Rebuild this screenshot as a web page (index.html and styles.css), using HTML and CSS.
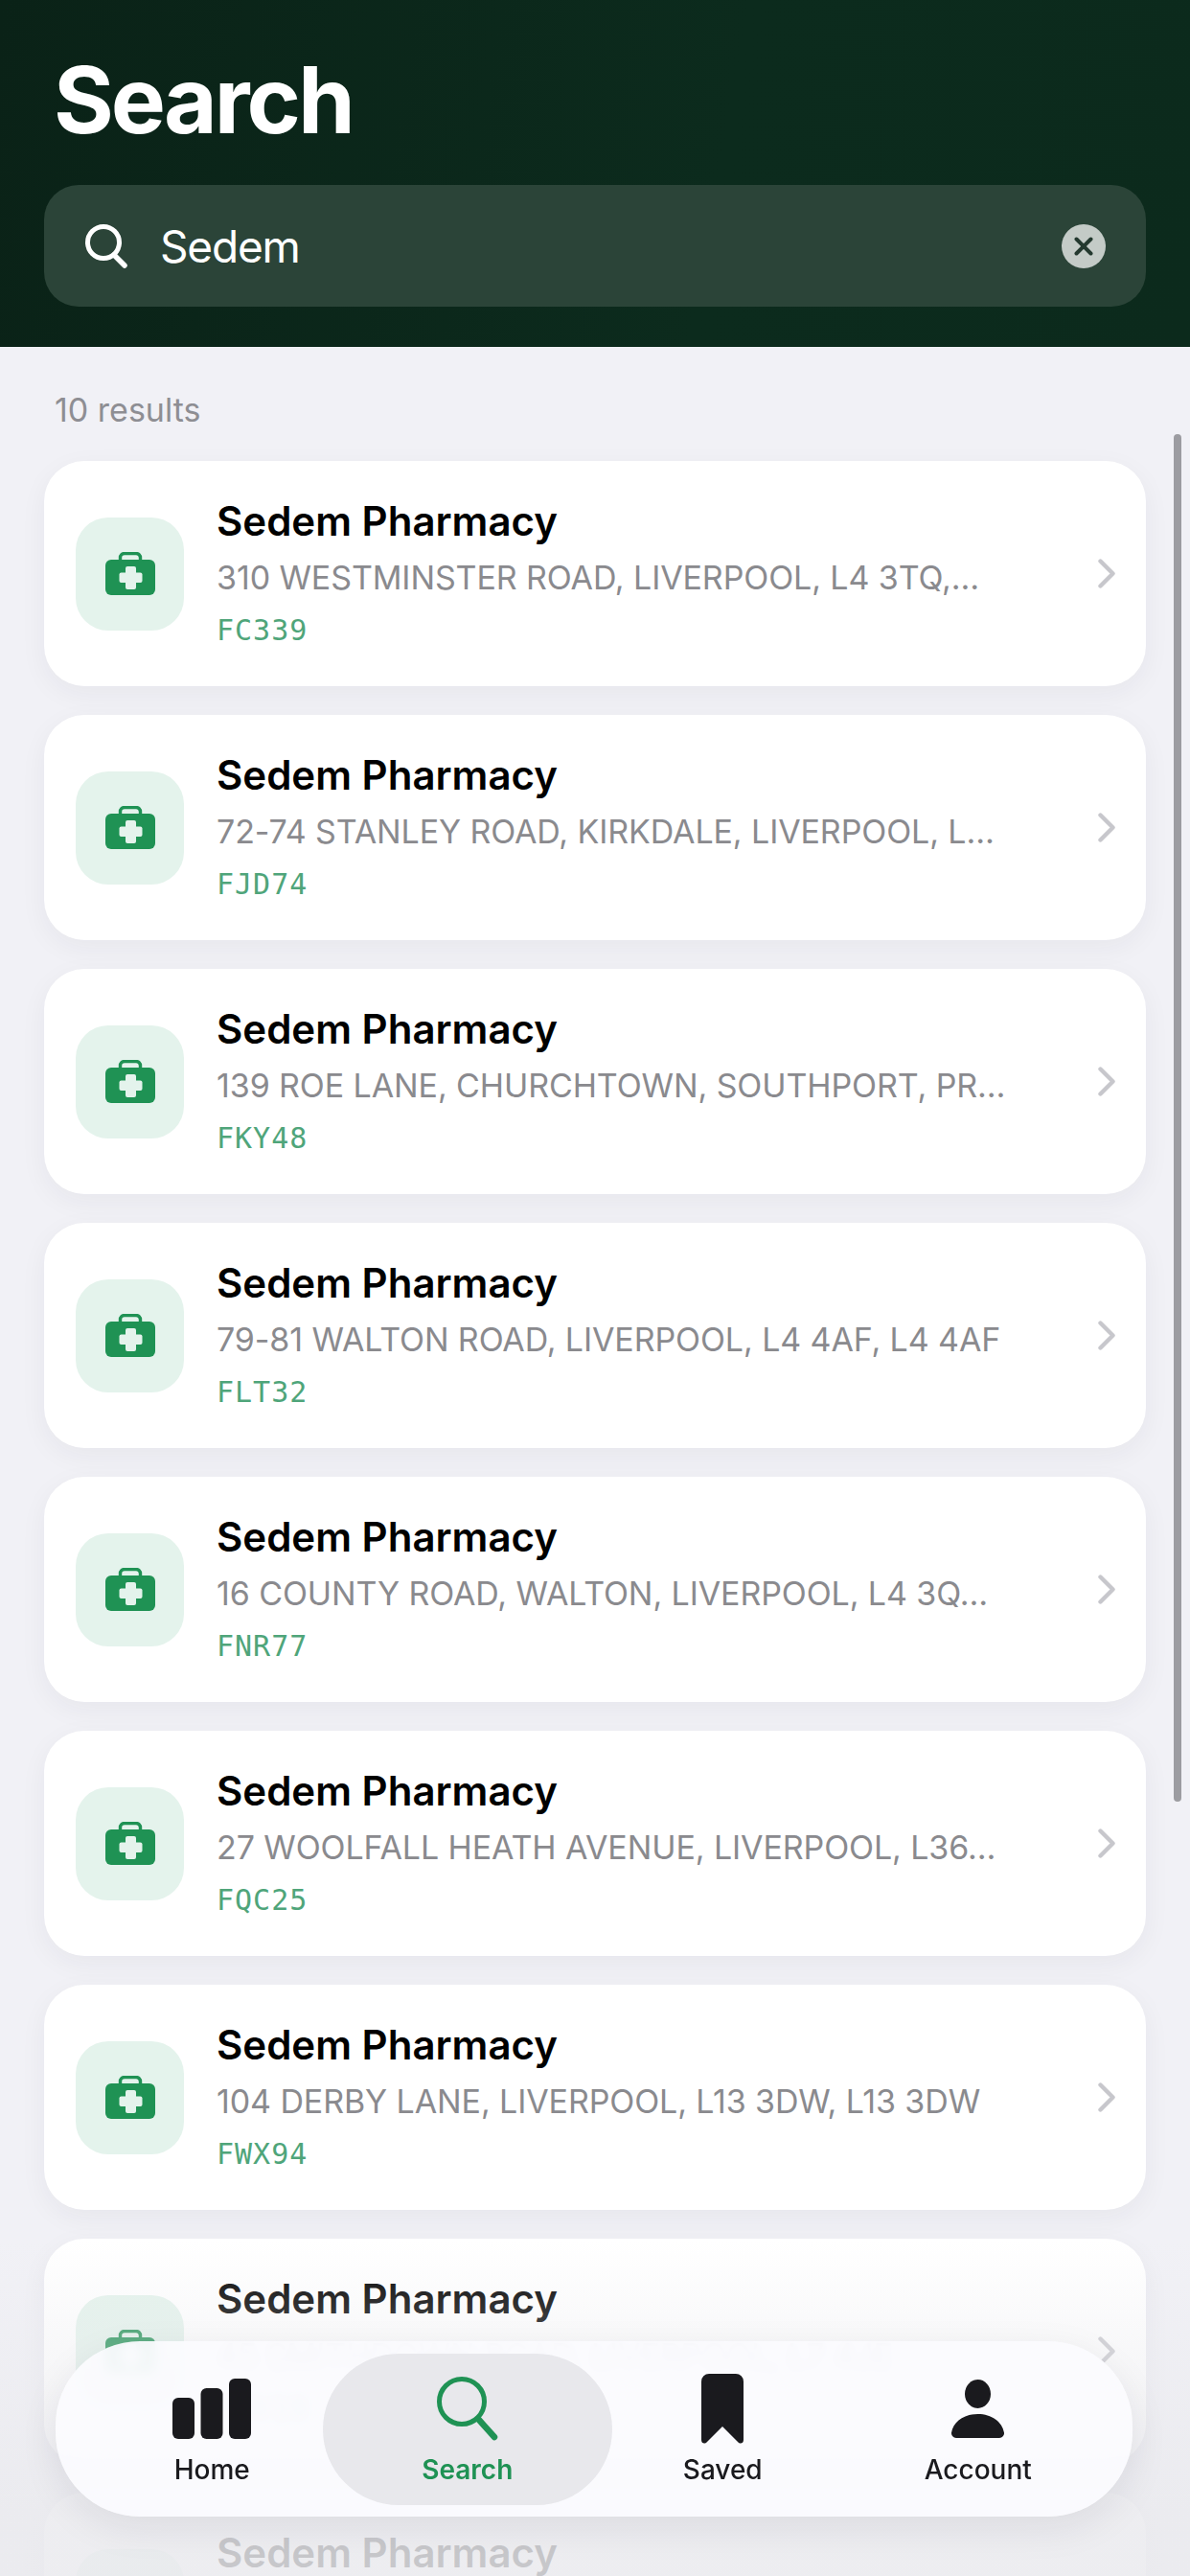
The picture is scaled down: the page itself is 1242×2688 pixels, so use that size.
FILE: index.html

```html
<!DOCTYPE html>
<html lang="en">
<head>
  <meta charset="UTF-8" />
  <meta name="viewport" content="width=device-width, initial-scale=1.0" />
  <title>Search</title>
  <link rel="stylesheet" href="styles.css">
</head>
<body>
  <svg class="defs" width="0" height="0">
    <symbol id="case" viewBox="0 0 52 45">
      <path d="M15.500 9V6a4.500 4.500 0 0 1 4.500-4.500h12A4.500 4.500 0 0 1 36.500 6v3" fill="none" stroke="#1f9254" stroke-width="3.400"/>
      <rect x="0" y="8" width="52" height="37" rx="6" fill="#1f9254"/>
      <rect x="14.500" y="21.500" width="24" height="10.500" rx="2" fill="#e4f3ec"/>
      <rect x="21" y="15" width="11" height="24" rx="2" fill="#e4f3ec"/>
    </symbol>
    <symbol id="chev" viewBox="0 0 18 31">
      <path d="M2.500 2.500 15.500 15.500 2.500 28.500" fill="none" stroke="#c7c7cc" stroke-width="4.400" stroke-linecap="round" stroke-linejoin="round"/>
    </symbol>
  </svg>

  <div class="app">
    <header class="top">
      <h1>Search</h1>
      <div class="search-box">
        <svg class="search-icon" viewBox="0 0 44 46"><circle cx="19" cy="19" r="16.500" fill="none" stroke="#fff" stroke-width="5"/><path d="M30 32 41 43" stroke="#fff" stroke-width="5.500" stroke-linecap="round"/></svg>
        <span class="search-text">Sedem</span>
        <svg class="clear-icon" viewBox="0 0 46 46"><circle cx="23" cy="23" r="23" fill="#c4cbc7"/><path d="M15.500 15.500 30.500 30.500M30.500 15.500 15.500 30.500" stroke="#24392f" stroke-width="4" stroke-linecap="round"/></svg>
      </div>
    </header>

    <main class="results">
      <div class="count">10 results</div>
      <div class="card-list">
        <div class="card">
          <div class="tile"><svg class="case"><use href="#case"/></svg></div>
          <div class="info">
            <div class="name">Sedem Pharmacy</div>
            <div class="address">310 WESTMINSTER ROAD, LIVERPOOL, L4 3TQ,…</div>
            <div class="code">FC339</div>
          </div>
          <svg class="chevron"><use href="#chev"/></svg>
        </div>
        <div class="card">
          <div class="tile"><svg class="case"><use href="#case"/></svg></div>
          <div class="info">
            <div class="name">Sedem Pharmacy</div>
            <div class="address">72-74 STANLEY ROAD, KIRKDALE, LIVERPOOL, L…</div>
            <div class="code">FJD74</div>
          </div>
          <svg class="chevron"><use href="#chev"/></svg>
        </div>
        <div class="card">
          <div class="tile"><svg class="case"><use href="#case"/></svg></div>
          <div class="info">
            <div class="name">Sedem Pharmacy</div>
            <div class="address">139 ROE LANE, CHURCHTOWN, SOUTHPORT, PR…</div>
            <div class="code">FKY48</div>
          </div>
          <svg class="chevron"><use href="#chev"/></svg>
        </div>
        <div class="card">
          <div class="tile"><svg class="case"><use href="#case"/></svg></div>
          <div class="info">
            <div class="name">Sedem Pharmacy</div>
            <div class="address">79-81 WALTON ROAD, LIVERPOOL, L4 4AF, L4 4AF</div>
            <div class="code">FLT32</div>
          </div>
          <svg class="chevron"><use href="#chev"/></svg>
        </div>
        <div class="card">
          <div class="tile"><svg class="case"><use href="#case"/></svg></div>
          <div class="info">
            <div class="name">Sedem Pharmacy</div>
            <div class="address">16 COUNTY ROAD, WALTON, LIVERPOOL, L4 3Q…</div>
            <div class="code">FNR77</div>
          </div>
          <svg class="chevron"><use href="#chev"/></svg>
        </div>
        <div class="card">
          <div class="tile"><svg class="case"><use href="#case"/></svg></div>
          <div class="info">
            <div class="name">Sedem Pharmacy</div>
            <div class="address">27 WOOLFALL HEATH AVENUE, LIVERPOOL, L36…</div>
            <div class="code">FQC25</div>
          </div>
          <svg class="chevron"><use href="#chev"/></svg>
        </div>
        <div class="card">
          <div class="tile"><svg class="case"><use href="#case"/></svg></div>
          <div class="info">
            <div class="name">Sedem Pharmacy</div>
            <div class="address">104 DERBY LANE, LIVERPOOL, L13 3DW, L13 3DW</div>
            <div class="code">FWX94</div>
          </div>
          <svg class="chevron"><use href="#chev"/></svg>
        </div>
        <div class="card">
          <div class="tile"><svg class="case"><use href="#case"/></svg></div>
          <div class="info">
            <div class="name">Sedem Pharmacy</div>
            <div class="address">45 SMITHDOWN ROAD, LIVERPOOL, L7 4JE</div>
            <div class="code">FWV19</div>
          </div>
          <svg class="chevron"><use href="#chev"/></svg>
        </div>
        <div class="card card-cut">
          <div class="tile"></div>
          <div class="info">
            <div class="name">Sedem Pharmacy</div>
          </div>
        </div>
      </div>
    </main>

    <div class="scrollbar"></div>
    <div class="fade"></div>

    <nav class="tabbar">
      <div class="tab">
        <div class="tab-icon"><svg class="icon-home" viewBox="0 0 82 63"><rect x="0" y="20" width="23" height="43" rx="6" fill="#1a1a1e"/><rect x="29.500" y="10" width="23" height="53" rx="6" fill="#1a1a1e"/><rect x="59" y="0" width="23" height="63" rx="6" fill="#1a1a1e"/></svg></div>
        <span>Home</span>
      </div>
      <div class="tab active">
        <div class="tab-icon"><svg class="icon-search" viewBox="0 0 64 67"><circle cx="26" cy="26" r="23.500" fill="none" stroke="#1f9254" stroke-width="5"/><path d="M43 44 60 63" stroke="#1f9254" stroke-width="6.500" stroke-linecap="round"/></svg></div>
        <span>Search</span>
      </div>
      <div class="tab">
        <div class="tab-icon"><svg class="icon-saved" viewBox="0 0 44 73"><path fill="#1a1a1e" d="M8 0h28a8 8 0 0 1 8 8v61c0 3.500-3.500 5-6 2L22 55 6 71c-2.500 3-6 1.500-6-2V8a8 8 0 0 1 8-8z"/></svg></div>
        <span>Saved</span>
      </div>
      <div class="tab">
        <div class="tab-icon"><svg class="icon-account" viewBox="0 0 55 61"><ellipse cx="27.500" cy="15" rx="13.500" ry="15" fill="#1a1a1e"/><path fill="#1a1a1e" d="M5 61a5 5 0 0 1-5-5.500C2 44 13 36 27.500 36S53 44 55 55.500A5 5 0 0 1 50 61z"/></svg></div>
        <span>Account</span>
      </div>
    </nav>
  </div>
</body>
</html>
```

FILE: styles.css

```css
* {
  box-sizing: border-box;
}
body {
  margin: 0;
  font-family: 'Inter', 'Liberation Sans', sans-serif;
  background: #f1f1f6;
}
.defs {
  position: absolute;
}
.app {
  position: relative;
  height: 2688px;
  overflow: hidden;
  display: flex;
  flex-direction: column;
}
.top {
  height: 362px;
  flex-shrink: 0;
  padding: 50px 46px 0;
  background: linear-gradient(100deg, #0a2217, #0c2b1d 60%, #0c2a1c);
}
h1 {
  margin: 0 0 0 10px;
  font-size: 96px;
  line-height: 108px;
  font-weight: 700;
  letter-spacing: -3px;
  color: #fff;
}
.search-box {
  margin-top: 35px;
  height: 127px;
  padding: 0 42px 0 43px;
  border-radius: 36px;
  background: #2b4438;
  display: flex;
  align-items: center;
}
.search-icon {
  width: 44px;
  height: 46px;
  flex-shrink: 0;
}
.search-text {
  margin-left: 34px;
  flex: 1;
  font-size: 46px;
  letter-spacing: -1.2px;
  color: #fff;
}
.clear-icon {
  width: 46px;
  height: 46px;
}
.results {
  padding: 0 46px;
}
.count {
  height: 119px;
  padding: 45px 11px 0;
  font-size: 34px;
  line-height: 42px;
  color: #8e8e93;
}
.card-list {
  display: flex;
  flex-direction: column;
  gap: 30px;
}
.card {
  height: 235px;
  flex-shrink: 0;
  padding: 0 32px 0 33px;
  border-radius: 42px;
  background: #fff;
  box-shadow: 0 8px 28px rgba(40, 40, 60, 0.05);
  display: flex;
  align-items: center;
}
.card-cut {
  align-items: flex-start;
  padding-top: 38px;
}
.card-cut .tile {
  margin-top: 21px;
}
.tile {
  width: 113px;
  height: 118px;
  flex-shrink: 0;
  border-radius: 34px;
  background: #e4f3ec;
  display: flex;
  align-items: center;
  justify-content: center;
}
.case {
  width: 52px;
  height: 45px;
}
.info {
  flex: 1;
  min-width: 0;
  margin-left: 34px;
  padding-bottom: 3px;
}
.name {
  font-size: 42px;
  line-height: 50px;
  font-weight: 600;
  color: #000;
}
.address {
  margin-top: 14px;
  font-size: 34px;
  line-height: 40px;
  letter-spacing: -0.1px;
  color: #8a8a8e;
  white-space: nowrap;
}
.code {
  margin-top: 17px;
  font-family: 'DejaVu Sans Mono', 'Liberation Mono', monospace;
  font-size: 30px;
  line-height: 36px;
  letter-spacing: 1px;
  color: #4fa57a;
}
.chevron {
  width: 18px;
  height: 31px;
  flex-shrink: 0;
}
.scrollbar {
  position: absolute;
  left: 1225px;
  top: 453px;
  width: 8px;
  height: 1427px;
  border-radius: 4px;
  background: #9c9ca1;
}
.fade {
  position: absolute;
  left: 0;
  right: 0;
  bottom: 0;
  height: 350px;
  background: linear-gradient(to bottom, rgba(234, 234, 238, 0), rgba(234, 234, 238, 0.85) 80%, rgba(234, 234, 238, 0.85));
}
.tabbar {
  position: absolute;
  left: 58px;
  top: 2443px;
  width: 1124px;
  height: 183px;
  padding: 0 28px 0 30px;
  border-radius: 88px;
  background: rgba(251, 251, 254, 0.94);
  backdrop-filter: blur(6px);
  box-shadow: 0 12px 40px rgba(30, 30, 50, 0.08);
  display: grid;
  grid-template-columns: repeat(4, 1fr);
  align-items: center;
}
.tab {
  height: 158px;
  display: flex;
  flex-direction: column;
  align-items: center;
  justify-content: flex-end;
  padding-bottom: 20px;
  font-size: 28px;
  line-height: 34px;
  font-weight: 500;
  color: #1a1a1e;
}
.tab-icon {
  height: 74px;
  margin-bottom: 9px;
  display: flex;
  align-items: center;
  justify-content: center;
}
.icon-home {
  width: 82px;
  height: 63px;
}
.icon-search {
  width: 64px;
  height: 67px;
}
.icon-saved {
  width: 44px;
  height: 73px;
}
.icon-account {
  width: 55px;
  height: 61px;
}
.tab.active {
  margin: 0 -18px;
  border-radius: 79px;
  background: #e8e8ec;
  color: #1f9254;
  font-weight: 600;
}
```
